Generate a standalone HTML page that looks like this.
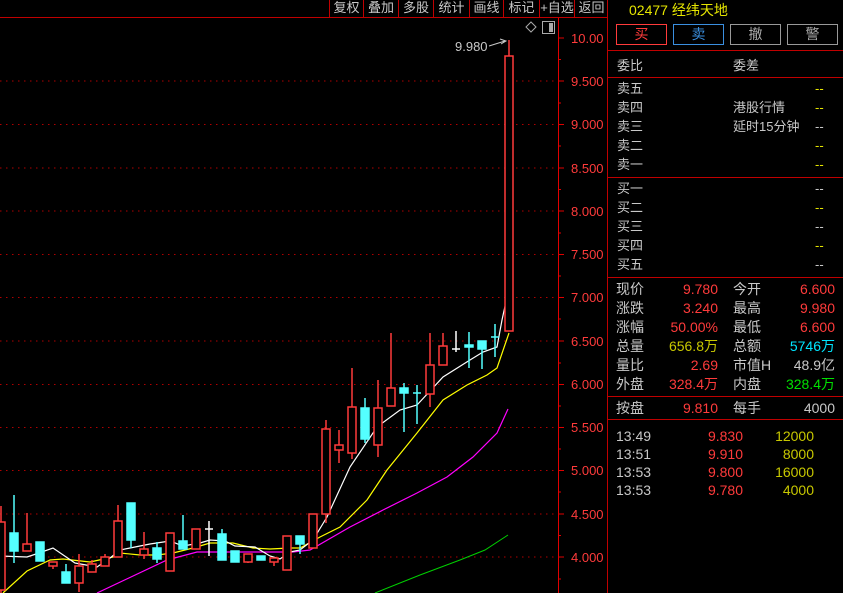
<!DOCTYPE html>
<html><head><meta charset="utf-8"><style>
html,body{margin:0;padding:0;background:#000;}
body{width:843px;height:593px;overflow:hidden;position:relative;font-family:"Liberation Sans","Noto Sans CJK SC",sans-serif;font-size:13px;color:#c8c8c8;}
.a{position:absolute;white-space:nowrap;line-height:16px;}
.tb{position:absolute;top:0;height:17px;line-height:16px;font-size:13px;color:#c8c8c8;text-align:center;}
.btn{position:absolute;top:24px;height:19px;width:49px;line-height:19px;text-align:center;font-size:14px;border:1px solid #999;color:#aaa;}
.r{color:#ff3b3b}.y{color:#e6e600}.g{color:#00e000}.c{color:#00e5ff}.w{color:#c8c8c8}
.hl{position:absolute;left:608px;width:235px;height:1px;background:#c00000;}
</style></head><body>
<svg width="608" height="593" style="position:absolute;left:0;top:0">
<line x1="0" y1="17.5" x2="608" y2="17.5" stroke="#c00000"/>
<g stroke="#b00000" stroke-dasharray="1.5,4.5">
<line x1="0" y1="81" x2="556" y2="81"/><line x1="0" y1="124.5" x2="556" y2="124.5"/><line x1="0" y1="168" x2="556" y2="168"/><line x1="0" y1="211" x2="556" y2="211"/><line x1="0" y1="254.5" x2="556" y2="254.5"/><line x1="0" y1="297.5" x2="556" y2="297.5"/><line x1="0" y1="341" x2="556" y2="341"/><line x1="0" y1="384.5" x2="556" y2="384.5"/><line x1="0" y1="427.5" x2="556" y2="427.5"/><line x1="0" y1="470.5" x2="556" y2="470.5"/><line x1="0" y1="514" x2="556" y2="514"/><line x1="0" y1="557" x2="556" y2="557"/>
</g>
<line x1="558.5" y1="18" x2="558.5" y2="593" stroke="#e00000"/>
<line x1="607.5" y1="0" x2="607.5" y2="593" stroke="#c00000"/>
<g stroke="#e00000">
<line x1="558" y1="38" x2="564" y2="38"/><line x1="558" y1="81" x2="564" y2="81"/><line x1="558" y1="124.5" x2="564" y2="124.5"/><line x1="558" y1="168" x2="564" y2="168"/><line x1="558" y1="211" x2="564" y2="211"/><line x1="558" y1="254.5" x2="564" y2="254.5"/><line x1="558" y1="297.5" x2="564" y2="297.5"/><line x1="558" y1="341" x2="564" y2="341"/><line x1="558" y1="384.5" x2="564" y2="384.5"/><line x1="558" y1="427.5" x2="564" y2="427.5"/><line x1="558" y1="470.5" x2="564" y2="470.5"/><line x1="558" y1="514" x2="564" y2="514"/><line x1="558" y1="557" x2="564" y2="557"/>
<line x1="558" y1="59.5" x2="561" y2="59.5"/><line x1="558" y1="103" x2="561" y2="103"/><line x1="558" y1="146" x2="561" y2="146"/><line x1="558" y1="189.5" x2="561" y2="189.5"/><line x1="558" y1="233" x2="561" y2="233"/><line x1="558" y1="276" x2="561" y2="276"/><line x1="558" y1="319" x2="561" y2="319"/><line x1="558" y1="363" x2="561" y2="363"/><line x1="558" y1="406" x2="561" y2="406"/><line x1="558" y1="449" x2="561" y2="449"/><line x1="558" y1="492" x2="561" y2="492"/><line x1="558" y1="535.5" x2="561" y2="535.5"/><line x1="558" y1="579" x2="561" y2="579"/>
</g>
<g font-family="Liberation Sans" font-size="13" fill="#ff3b3b">
<text x="571" y="43">10.00</text><text x="571" y="86">9.500</text><text x="571" y="129">9.000</text><text x="571" y="173">8.500</text><text x="571" y="216">8.000</text><text x="571" y="259">7.500</text><text x="571" y="302">7.000</text><text x="571" y="346">6.500</text><text x="571" y="389">6.000</text><text x="571" y="432">5.500</text><text x="571" y="475">5.000</text><text x="571" y="519">4.500</text><text x="571" y="562">4.000</text>
</g>
<path d="M531 22 L536 27 L531 32 L526 27 Z" fill="none" stroke="#aaa"/>
<rect x="542.5" y="21.5" width="12" height="12" fill="none" stroke="#aaa"/><rect x="549" y="23" width="4" height="9" fill="#aaa"/>
<text x="455" y="51" font-family="Liberation Sans" font-size="13" fill="#c8c8c8">9.980</text>
<path d="M489 46 L505 41 M500 39 L506 41 L501 44" fill="none" stroke="#c8c8c8"/>
<!-- MAs -->
<polyline fill="none" stroke="#00d000" points="375,593 420,575 460,560 485,550 508,535"/>
<polyline fill="none" stroke="#ff00ff" stroke-width="1.2" points="97,593 167,560 197,552 240,552 293,552 310,550 350,527 383,510 417,493 447,477 473,457 497,433 508,409"/>
<polyline fill="none" stroke="#ffff00" stroke-width="1.2" points="3,593 27,571 50,560 63,559 90,562 113,557 120,553 140,555 157,555 173,553 193,548 210,543 233,543 253,548 270,549 290,548 300,548 320,537 340,527 367,500 387,470 417,433 443,400 467,385 487,375 497,368 509,333"/>
<polyline fill="none" stroke="#fff" stroke-width="1.2" points="0,556 27,557 36,554 53,548 75,563 97,567 110,558 120,550 130,548 150,544 170,541 183,546 200,543 210,540 225,541 235,546 255,547 270,556 280,559 290,552 300,550 313,540 327,517 350,467 377,427 400,410 417,405 443,377 470,360 483,352 497,347 502,320 509,288"/>
<!-- candles -->
<g stroke-width="1.5">
<g stroke="#ff3b3b" fill="#000">
<line x1="1" y1="506" x2="1" y2="593"/><rect x="-3" y="522" width="8" height="68"/>
<line x1="27" y1="513" x2="27" y2="551"/><rect x="23" y="544" width="8" height="7"/>
<line x1="53" y1="562" x2="53" y2="569"/><rect x="49" y="562" width="8" height="4"/>
<line x1="79" y1="554" x2="79" y2="592"/><rect x="75" y="566" width="8" height="17"/>
<line x1="92" y1="560" x2="92" y2="572"/><rect x="88" y="564" width="8" height="8"/>
<line x1="105" y1="554" x2="105" y2="566"/><rect x="101" y="557" width="8" height="9"/>
<line x1="118" y1="505" x2="118" y2="557"/><rect x="114" y="521" width="8" height="36"/>
<line x1="144" y1="532" x2="144" y2="559"/><rect x="140" y="549" width="8" height="6"/>
<rect x="166" y="533" width="8" height="38"/>
<rect x="192" y="529" width="8" height="20"/>
<line x1="248" y1="554" x2="248" y2="563"/><rect x="244" y="554" width="8" height="8"/>
<line x1="274" y1="558" x2="274" y2="566"/><rect x="270" y="558" width="8" height="4"/>
<rect x="283" y="536" width="8" height="34"/>
<rect x="309" y="514" width="8" height="34"/>
<line x1="326" y1="420" x2="326" y2="523"/><rect x="322" y="429" width="8" height="85"/>
<line x1="339" y1="430" x2="339" y2="463"/><rect x="335" y="445" width="8" height="5"/>
<line x1="352" y1="368" x2="352" y2="459"/><rect x="348" y="407" width="8" height="46"/>
<line x1="378" y1="380" x2="378" y2="457"/><rect x="374" y="408" width="8" height="37"/>
<line x1="391" y1="333" x2="391" y2="406"/><rect x="387" y="388" width="8" height="18"/>
<line x1="430" y1="333" x2="430" y2="407"/><rect x="426" y="365" width="8" height="29"/>
<line x1="443" y1="333" x2="443" y2="365"/><rect x="439" y="346" width="8" height="19"/>
<line x1="509" y1="40" x2="509" y2="56"/><rect x="505" y="56" width="8" height="275"/>
</g>
<g stroke="#54ffff" fill="#54ffff">
<line x1="14" y1="495" x2="14" y2="563"/><rect x="10" y="533" width="8" height="18"/>
<rect x="36" y="542" width="8" height="19"/>
<line x1="66" y1="564" x2="66" y2="583"/><rect x="62" y="572" width="8" height="11"/>
<line x1="131" y1="503" x2="131" y2="548"/><rect x="127" y="503" width="8" height="37"/>
<line x1="157" y1="542" x2="157" y2="563"/><rect x="153" y="548" width="8" height="11"/>
<line x1="183" y1="515" x2="183" y2="549"/><rect x="179" y="541" width="8" height="8"/>
<line x1="222" y1="529" x2="222" y2="560"/><rect x="218" y="534" width="8" height="26"/>
<rect x="231" y="551" width="8" height="11"/>
<rect x="257" y="556" width="8" height="4"/>
<line x1="300" y1="536" x2="300" y2="554"/><rect x="296" y="536" width="8" height="8"/>
<line x1="365" y1="398" x2="365" y2="443"/><rect x="361" y="408" width="8" height="31"/>
<line x1="404" y1="383" x2="404" y2="432"/><rect x="400" y="388" width="8" height="5"/>
<line x1="417" y1="385" x2="417" y2="424"/><line x1="413" y1="393" x2="421" y2="393"/>
<line x1="469" y1="332" x2="469" y2="368"/><rect x="465" y="345" width="8" height="2"/>
<line x1="482" y1="341" x2="482" y2="369"/><rect x="478" y="341" width="8" height="8"/>
<line x1="495" y1="324" x2="495" y2="357"/><line x1="491" y1="337" x2="499" y2="337"/>
</g>
<g stroke="#fff">
<line x1="209" y1="521" x2="209" y2="556"/><line x1="205" y1="529" x2="213" y2="529"/>
<line x1="456" y1="331" x2="456" y2="352"/><line x1="452" y1="349" x2="460" y2="349"/>
</g>
</g>
</svg>
<!-- toolbar -->
<div style="position:absolute;left:329px;top:0;width:1px;height:17px;background:#c00000"></div>
<div class="tb" style="left:330px;width:33px;border-right:1px solid #c00000">复权</div>
<div class="tb" style="left:364px;width:34px;border-right:1px solid #c00000">叠加</div>
<div class="tb" style="left:399px;width:34px;border-right:1px solid #c00000">多股</div>
<div class="tb" style="left:434px;width:35px;border-right:1px solid #c00000">统计</div>
<div class="tb" style="left:470px;width:33px;border-right:1px solid #c00000">画线</div>
<div class="tb" style="left:504px;width:35px;border-right:1px solid #c00000">标记</div>
<div class="tb" style="left:540px;width:34px;border-right:1px solid #c00000">+自选</div>
<div class="tb" style="left:575px;width:33px;">返回</div>
<!-- right panel -->
<div class="a y" style="left:629px;top:2px;font-size:14px">02477 经纬天地</div>
<div class="btn" style="left:616px;border-color:#ff3b3b;color:#ff3b3b">买</div>
<div class="btn" style="left:673px;border-color:#3a8fe0;color:#3a8fe0">卖</div>
<div class="btn" style="left:730px">撤</div>
<div class="btn" style="left:787px">警</div>
<div class="hl" style="top:50px"></div>
<div class="hl" style="top:77px"></div>
<div class="hl" style="top:177px"></div>
<div class="hl" style="top:277px"></div>
<div class="hl" style="top:396px"></div>
<div class="hl" style="top:419px"></div>
<div class="a" style="left:617px;top:58px">委比</div><div class="a" style="left:733px;top:58px">委差</div>
<div class="a" style="left:617px;top:81px">卖五</div><div class="a y" style="left:815px;top:81px">--</div>
<div class="a" style="left:617px;top:100px">卖四</div><div class="a" style="left:733px;top:100px">港股行情</div><div class="a y" style="left:815px;top:100px">--</div>
<div class="a" style="left:617px;top:119px">卖三</div><div class="a" style="left:733px;top:119px">延时15分钟</div><div class="a" style="left:815px;top:119px">--</div>
<div class="a" style="left:617px;top:138px">卖二</div><div class="a y" style="left:815px;top:138px">--</div>
<div class="a" style="left:617px;top:157px">卖一</div><div class="a y" style="left:815px;top:157px">--</div>
<div class="a" style="left:617px;top:181px">买一</div><div class="a" style="left:815px;top:181px">--</div>
<div class="a" style="left:617px;top:200px">买二</div><div class="a y" style="left:815px;top:200px">--</div>
<div class="a" style="left:617px;top:219px">买三</div><div class="a" style="left:815px;top:219px">--</div>
<div class="a" style="left:617px;top:238px">买四</div><div class="a y" style="left:815px;top:238px">--</div>
<div class="a" style="left:617px;top:257px">买五</div><div class="a" style="left:815px;top:257px">--</div>
<div style="position:absolute;left:608px;top:281px;width:235px;font-size:14px">
<div class="a" style="left:8px;top:0">现价</div><div class="a r" style="right:125px;top:0">9.780</div><div class="a" style="left:125px;top:0">今开</div><div class="a r" style="right:8px;top:0">6.600</div>
<div class="a" style="left:8px;top:19px">涨跌</div><div class="a r" style="right:125px;top:19px">3.240</div><div class="a" style="left:125px;top:19px">最高</div><div class="a r" style="right:8px;top:19px">9.980</div>
<div class="a" style="left:8px;top:38px">涨幅</div><div class="a r" style="right:125px;top:38px">50.00%</div><div class="a" style="left:125px;top:38px">最低</div><div class="a r" style="right:8px;top:38px">6.600</div>
<div class="a" style="left:8px;top:57px">总量</div><div class="a y" style="right:125px;top:57px;color:#c8c800">656.8万</div><div class="a" style="left:125px;top:57px">总额</div><div class="a c" style="right:8px;top:57px">5746万</div>
<div class="a" style="left:8px;top:76px">量比</div><div class="a r" style="right:125px;top:76px">2.69</div><div class="a" style="left:125px;top:76px">市值H</div><div class="a" style="right:8px;top:76px">48.9亿</div>
<div class="a" style="left:8px;top:95px">外盘</div><div class="a r" style="right:125px;top:95px">328.4万</div><div class="a" style="left:125px;top:95px">内盘</div><div class="a g" style="right:8px;top:95px">328.4万</div>
<div class="a" style="left:8px;top:119px">按盘</div><div class="a r" style="right:125px;top:119px">9.810</div><div class="a" style="left:125px;top:119px">每手</div><div class="a" style="right:8px;top:119px">4000</div>
<div class="a" style="left:8px;top:147px">13:49</div><div class="a r" style="right:100px;top:147px">9.830</div><div class="a y" style="right:29px;top:147px;color:#c8c800">12000</div>
<div class="a" style="left:8px;top:165px">13:51</div><div class="a r" style="right:100px;top:165px">9.910</div><div class="a y" style="right:29px;top:165px;color:#c8c800">8000</div>
<div class="a" style="left:8px;top:183px">13:53</div><div class="a r" style="right:100px;top:183px">9.800</div><div class="a y" style="right:29px;top:183px;color:#c8c800">16000</div>
<div class="a" style="left:8px;top:201px">13:53</div><div class="a r" style="right:100px;top:201px">9.780</div><div class="a y" style="right:29px;top:201px;color:#c8c800">4000</div>
</div>
</body></html>
